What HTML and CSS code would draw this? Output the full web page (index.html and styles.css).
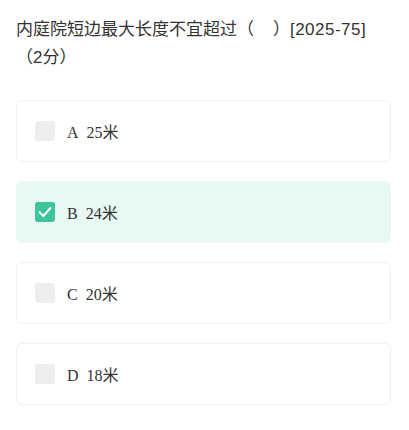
FILE: index.html
```html
<!DOCTYPE html>
<html lang="zh">
<head>
<meta charset="utf-8">
<link rel="stylesheet" href="styles.css">
</head>
<body>
<div class="page">
  <div class="question">内庭院短边最大长度不宜超过（&nbsp;&nbsp;&nbsp;&nbsp;）<span class="code">[2025-75]</span><span class="score">（2分）</span></div>
  <div class="options">
    <div class="option">
      <span class="box"></span>
      <span class="label">A&nbsp;&nbsp;25米</span>
    </div>
    <div class="option selected">
      <span class="box checked">
        <svg viewBox="0 0 20 20" width="20" height="20"><path d="M4.5 10.2 L8.4 14 L15.5 6" fill="none" stroke="#fff" stroke-width="2" stroke-linecap="round" stroke-linejoin="round"/></svg>
      </span>
      <span class="label">B&nbsp;&nbsp;24米</span>
    </div>
    <div class="option">
      <span class="box"></span>
      <span class="label">C&nbsp;&nbsp;20米</span>
    </div>
    <div class="option">
      <span class="box"></span>
      <span class="label">D&nbsp;&nbsp;18米</span>
    </div>
  </div>
</div>
</body>
</html>
```
FILE: styles.css
```css
html, body {
  margin: 0;
  padding: 0;
  background: #fff;
}
.page {
  padding: 16px 18px 16px 16px;
}
.question {
  font-family: "Liberation Sans", "Noto Sans CJK SC", sans-serif;
  font-size: 17px;
  line-height: 28px;
  color: #333;
}
.code {
  letter-spacing: 0.5px;
}
.score {
  white-space: nowrap;
}
.options {
  margin-top: 28px;
  display: flex;
  flex-direction: column;
  gap: 19px;
}
.option {
  height: 62px;
  box-sizing: border-box;
  border: 1px solid #f0f0f0;
  border-radius: 6px;
  display: flex;
  align-items: center;
  padding-left: 18px;
  gap: 12px;
}
.option.selected {
  background: #e8f8f2;
  border-color: #e8f8f2;
}
.box {
  width: 20px;
  height: 20px;
  border-radius: 3px;
  background: #eeeeee;
  display: flex;
  align-items: center;
  justify-content: center;
}
.box.checked {
  background: #3ec49a;
}
.label {
  font-family: "Liberation Serif", "Noto Sans CJK SC", serif;
  font-size: 16px;
  color: #333;
}
```
